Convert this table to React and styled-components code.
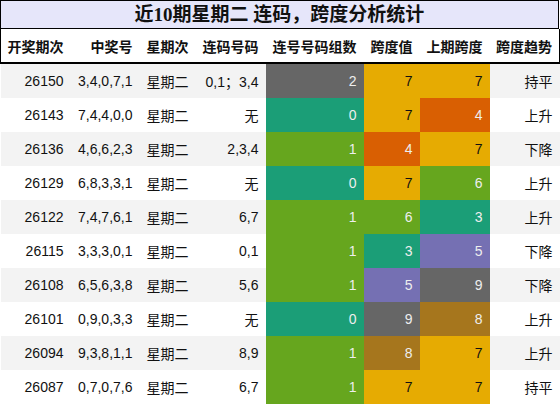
import React from 'react';
import styled, { createGlobalStyle } from 'styled-components';

const GlobalStyle = createGlobalStyle`
  body {
    margin: 0;
    background: #fff;
    font-family: "Liberation Sans", "Noto Sans CJK SC", sans-serif;
  }
`;

const COUNT_COLORS = { 0: '#1b9e77', 1: '#66a61e', 2: '#666666' };
const SPAN_COLORS = {
  3: '#1b9e77',
  4: '#d95f02',
  5: '#7570b3',
  6: '#66a61e',
  7: '#e6ab02',
  8: '#a6761d',
  9: '#666666',
};

const columns = [
  { title: '开奖期次', width: 70 },
  { title: '中奖号', width: 69 },
  { title: '星期次', width: 56 },
  { title: '连码号码', width: 70 },
  { title: '连号号码组数', width: 98 },
  { title: '跨度值', width: 56 },
  { title: '上期跨度', width: 70 },
  { title: '跨度趋势', width: 70 },
];

const rows = [
  ['26150', '3,4,0,7,1', '0,1；3,4', 2, 7, 7, '持平'],
  ['26143', '7,4,4,0,0', '无', 0, 7, 4, '上升'],
  ['26136', '4,6,6,2,3', '2,3,4', 1, 4, 7, '下降'],
  ['26129', '6,8,3,3,1', '无', 0, 7, 6, '上升'],
  ['26122', '7,4,7,6,1', '6,7', 1, 6, 3, '上升'],
  ['26115', '3,3,3,0,1', '0,1', 1, 3, 5, '下降'],
  ['26108', '6,5,6,3,8', '5,6', 1, 5, 9, '下降'],
  ['26101', '0,9,0,3,3', '无', 0, 9, 8, '上升'],
  ['26094', '9,3,8,1,1', '8,9', 1, 8, 7, '上升'],
  ['26087', '0,7,0,7,6', '6,7', 1, 7, 7, '持平'],
];

export default function App() {
  return (
    <>
      <GlobalStyle />
      <Wrapper>
        <Title>近10期星期二 连码，跨度分析统计</Title>
        <Table>
          <colgroup>
            {columns.map((c) => (
              <col key={c.title} style={{ width: c.width }} />
            ))}
          </colgroup>
          <thead>
            <tr>
              {columns.map((c) => (
                <HeadCell key={c.title}>{c.title}</HeadCell>
              ))}
            </tr>
          </thead>
          <tbody>
            {rows.map(([issue, nums, pairs, count, span, prev, trend], i) => (
              <Row key={issue} $odd={i % 2 === 0}>
                <Cell>{issue}</Cell>
                <Cell>{nums}</Cell>
                <Cell>星期二</Cell>
                <Cell>{pairs}</Cell>
                <ColorCell $bg={COUNT_COLORS[count]}>{count}</ColorCell>
                <ColorCell $bg={SPAN_COLORS[span]} $dark={span === 7}>{span}</ColorCell>
                <ColorCell $bg={SPAN_COLORS[prev]} $dark={prev === 7}>{prev}</ColorCell>
                <Cell>{trend}</Cell>
              </Row>
            ))}
          </tbody>
        </Table>
      </Wrapper>
    </>
  );
}

const Wrapper = styled.div`
  width: 559px;
`;

const Title = styled.div`
  height: 27px;
  line-height: 27px;
  border: 1px solid #000;
  background: #e6e6fa;
  text-align: center;
  font-family: "Liberation Serif", "Noto Sans CJK SC", serif;
  font-weight: bold;
  font-size: 19px;
  color: #111;
`;

const Table = styled.table`
  width: 559px;
  border-collapse: collapse;
  table-layout: fixed;

  thead tr {
    border-left: 1px solid #000;
    border-right: 1px solid #000;
    border-bottom: 2px solid #000;
  }
`;

const HeadCell = styled.th`
  height: 33px;
  padding: 0 7px 0 0;
  text-align: right;
  font-size: 14px;
  font-weight: bold;
  color: #111;
  background: #fff;
  white-space: nowrap;
`;

const Row = styled.tr`
  background: ${(p) => (p.$odd ? '#f3f3f3' : '#fff')};
`;

const Cell = styled.td`
  height: 34px;
  padding: 0 7px 0 0;
  text-align: right;
  font-size: 14px;
  color: #111;
  white-space: nowrap;
`;

const ColorCell = styled(Cell)`
  background: ${(p) => p.$bg};
  color: ${(p) => (p.$dark ? '#111' : '#eee')};
`;
